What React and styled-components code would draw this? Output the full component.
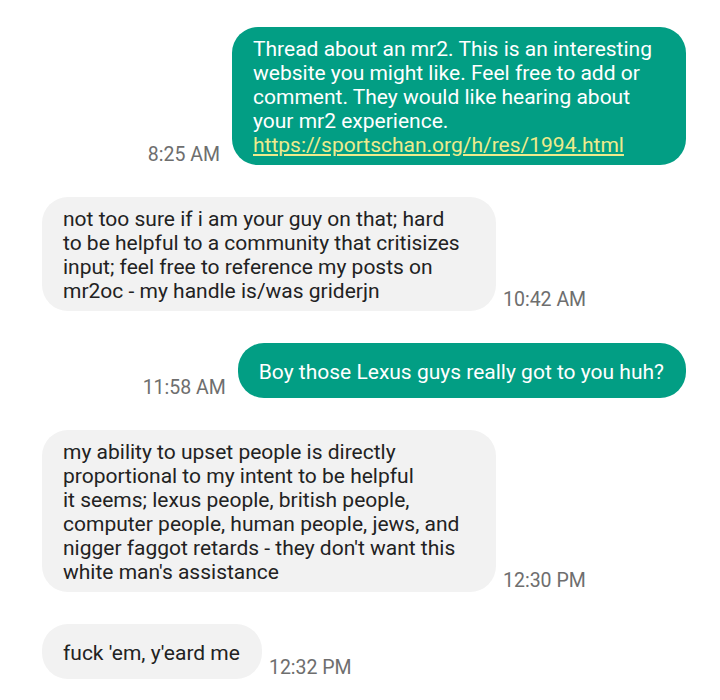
import React from "react";
import styled, { createGlobalStyle } from "styled-components";

const GlobalStyle = createGlobalStyle`
  body {
    margin: 0;
    background: #ffffff;
    font-family: Roboto, "Noto Sans", sans-serif;
  }
`;

const Thread = styled.div`
  display: flex;
  flex-direction: column;
  gap: 32px;
  padding: 27px 34px 20px 42px;
`;

const Row = styled.div`
  display: flex;
  align-items: flex-end;
  justify-content: flex-start;
  flex-direction: ${p => (p.out ? "row-reverse" : "row")};
`;

const Bubble = styled.div`
  box-sizing: border-box;
  width: ${p => (p.wide ? "454px" : "auto")};
  min-height: 55px;
  display: flex;
  align-items: center;
  padding: 10px 22px 8px 21px;
  border-radius: 26px;
  background: ${p => (p.out ? "#029e84" : "#f2f2f2")};
  color: ${p => (p.out ? "#ffffff" : "#222222")};
  font-size: 21px;
  line-height: 24px;
  white-space: pre-line;
`;

const Time = styled.span`
  font-size: 19.5px;
  line-height: 22px;
  color: #6e6e6e;
  margin: ${p => (p.out ? "0 12px -1px 0" : "0 0 0 7px")};
`;

const Link = styled.a`
  color: #eeeb8c;
  text-decoration: underline;
`;

const messages = [
  {
    out: true,
    wide: true,
    time: "8:25 AM",
    text:
      "Thread about an mr2. This is an interesting\nwebsite you might like. Feel free to add or\ncomment. They would like hearing about\nyour mr2 experience.\n",
    link: "https://sportschan.org/h/res/1994.html"
  },
  {
    wide: true,
    time: "10:42 AM",
    text:
      "not too sure if i am your guy on that; hard\nto be helpful to a community that critisizes\ninput; feel free to reference my posts on\nmr2oc - my handle is/was griderjn"
  },
  { out: true, time: "11:58 AM", text: "Boy those Lexus guys really got to you huh?" },
  {
    wide: true,
    time: "12:30 PM",
    text:
      "my ability to upset people is directly\nproportional to my intent to be helpful\nit seems; lexus people, british people,\ncomputer people, human people, jews, and\nnigger faggot retards - they don't want this\nwhite man's assistance"
  },
  { time: "12:32 PM", text: "fuck 'em, y'eard me" }
];

function App() {
  return (
    <>
      <GlobalStyle />
      <Thread>
        {messages.map(m => (
          <Row key={m.time} out={m.out}>
            <Bubble out={m.out} wide={m.wide}>
              <div>
                {m.text}
                {m.link && <Link href="#">{m.link}</Link>}
              </div>
            </Bubble>
            <Time out={m.out}>{m.time}</Time>
          </Row>
        ))}
      </Thread>
    </>
  );
}

export default App;
